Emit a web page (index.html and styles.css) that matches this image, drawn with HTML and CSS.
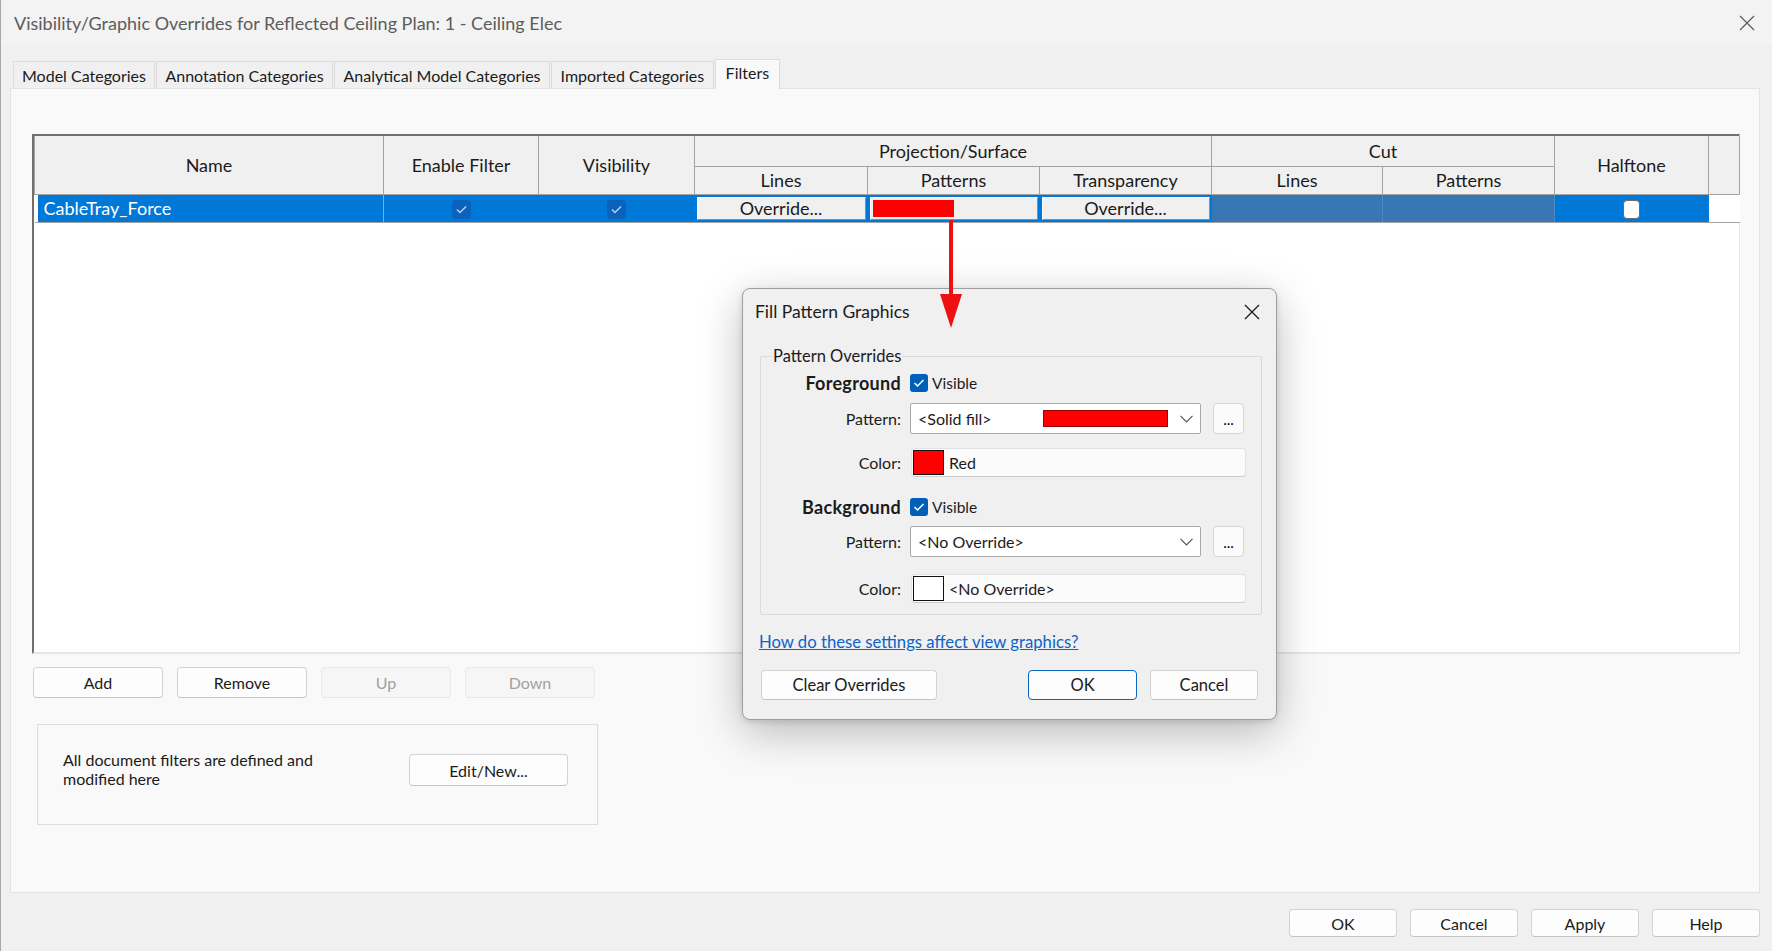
FILE: index.html
```html
<!DOCTYPE html>
<html lang="en">

<head>
    <meta charset="UTF-8">
    <title>Visibility/Graphic Overrides</title>
    <link rel="stylesheet" href="styles.css">
</head>

<body>
    <div class="window">
        <div class="titlebar">
            <span class="title">Visibility/Graphic Overrides for Reflected Ceiling Plan: 1 - Ceiling Elec</span>
            <span class="close-icon">
                <svg width="16" height="16" viewBox="0 0 16 16">
                    <path d="M1 1 L15 15 M15 1 L1 15" stroke="#5a5a5a" stroke-width="1.2" fill="none" />
                </svg>
            </span>
        </div>

        <div class="content">
            <div class="tabs">
                <div class="tab">Model Categories</div>
                <div class="tab">Annotation Categories</div>
                <div class="tab">Analytical Model Categories</div>
                <div class="tab">Imported Categories</div>
                <div class="tab active">Filters</div>
            </div>

            <div class="tab-page">
                <div class="filter-grid">
                    <table class="filters">
                        <colgroup>
                            <col class="c-name">
                            <col class="c-enable">
                            <col class="c-vis">
                            <col class="c-lines">
                            <col class="c-pat">
                            <col class="c-trans">
                            <col class="c-cut-lines">
                            <col class="c-cut-pat">
                            <col class="c-half">
                            <col class="c-fill">
                        </colgroup>
                        <thead>
                            <tr class="head-top">
                                <th rowspan="2">Name</th>
                                <th rowspan="2">Enable Filter</th>
                                <th rowspan="2">Visibility</th>
                                <th colspan="3">Projection/Surface</th>
                                <th colspan="2">Cut</th>
                                <th rowspan="2">Halftone</th>
                                <th rowspan="2"></th>
                            </tr>
                            <tr class="head-sub">
                                <th>Lines</th>
                                <th>Patterns</th>
                                <th>Transparency</th>
                                <th>Lines</th>
                                <th>Patterns</th>
                            </tr>
                        </thead>
                        <tbody>
                            <tr class="selected">
                                <td class="name-cell">CableTray_Force</td>
                                <td class="center">
                                    <span class="row-check">
                                        <svg width="19" height="19" viewBox="0 0 19 19">
                                            <polyline points="5,9.5 8,12.5 14,6.5" stroke="#b9d4ef" stroke-width="1.4" fill="none" />
                                        </svg>
                                    </span>
                                </td>
                                <td class="center">
                                    <span class="row-check">
                                        <svg width="19" height="19" viewBox="0 0 19 19">
                                            <polyline points="5,9.5 8,12.5 14,6.5" stroke="#b9d4ef" stroke-width="1.4" fill="none" />
                                        </svg>
                                    </span>
                                </td>
                                <td class="btn-cell"><div class="cell-btn">Override...</div></td>
                                <td class="btn-cell"><div class="cell-btn pattern-btn"><span class="red-bar"></span></div></td>
                                <td class="btn-cell"><div class="cell-btn">Override...</div></td>
                                <td class="dither"></td>
                                <td class="dither"></td>
                                <td class="center"><span class="half-check"></span></td>
                                <td class="blank"></td>
                            </tr>
                        </tbody>
                    </table>
                </div>

                <div class="grid-actions">
                    <button class="btn">Add</button>
                    <button class="btn">Remove</button>
                    <button class="btn" disabled>Up</button>
                    <button class="btn" disabled>Down</button>
                </div>

                <div class="info-box">
                    <p>All document filters are defined and<br>modified here</p>
                    <button class="btn edit-btn">Edit/New...</button>
                </div>
            </div>

            <div class="footer">
                <button class="btn">OK</button>
                <button class="btn">Cancel</button>
                <button class="btn">Apply</button>
                <button class="btn">Help</button>
            </div>
        </div>

        <div class="fill-dialog">
            <div class="fd-titlebar">
                <span>Fill Pattern Graphics</span>
                <svg width="16" height="16" viewBox="0 0 16 16">
                    <path d="M1 1 L15 15 M15 1 L1 15" stroke="#1b1b1b" stroke-width="1.3" fill="none" />
                </svg>
            </div>
            <div class="fd-body">
                <fieldset class="fd-group">
                    <legend>Pattern Overrides</legend>

                    <div class="fd-row head-row">
                        <span class="fd-label strong">Foreground</span>
                        <span class="blue-check">
                            <svg width="18" height="18" viewBox="0 0 18 18">
                                <polyline points="4.5,9 7.5,12 13.5,6" stroke="#fff" stroke-width="1.5" fill="none" />
                            </svg>
                        </span>
                        <span class="check-text">Visible</span>
                    </div>
                    <div class="fd-row pattern-row">
                        <span class="fd-label">Pattern:</span>
                        <div class="select">
                            <span class="select-text">&lt;Solid fill&gt;</span>
                            <span class="fill-bar"></span>
                            <svg class="chevron" width="13" height="8" viewBox="0 0 13 8">
                                <polyline points="0.5,0.8 6.5,6.8 12.5,0.8" stroke="#555" stroke-width="1.2" fill="none" />
                            </svg>
                        </div>
                        <button class="dots-btn">...</button>
                    </div>
                    <div class="fd-row color-row">
                        <span class="fd-label">Color:</span>
                        <div class="color-field">
                            <span class="swatch red"></span>
                            <span>Red</span>
                        </div>
                    </div>

                    <div class="fd-row head-row bg-head">
                        <span class="fd-label strong">Background</span>
                        <span class="blue-check">
                            <svg width="18" height="18" viewBox="0 0 18 18">
                                <polyline points="4.5,9 7.5,12 13.5,6" stroke="#fff" stroke-width="1.5" fill="none" />
                            </svg>
                        </span>
                        <span class="check-text">Visible</span>
                    </div>
                    <div class="fd-row pattern-row bg-pattern">
                        <span class="fd-label">Pattern:</span>
                        <div class="select">
                            <span class="select-text">&lt;No Override&gt;</span>
                            <svg class="chevron" width="13" height="8" viewBox="0 0 13 8">
                                <polyline points="0.5,0.8 6.5,6.8 12.5,0.8" stroke="#555" stroke-width="1.2" fill="none" />
                            </svg>
                        </div>
                        <button class="dots-btn">...</button>
                    </div>
                    <div class="fd-row color-row">
                        <span class="fd-label">Color:</span>
                        <div class="color-field">
                            <span class="swatch"></span>
                            <span>&lt;No Override&gt;</span>
                        </div>
                    </div>
                </fieldset>

                <a class="fd-link" href="#">How do these settings affect view graphics?</a>

                <div class="fd-actions">
                    <button class="btn clear-btn">Clear Overrides</button>
                    <button class="btn ok-btn">OK</button>
                    <button class="btn">Cancel</button>
                </div>
            </div>
        </div>

        <!-- red annotation arrow, drawn over the dialog -->
        <div class="arrow">
            <svg width="22" height="108" viewBox="0 0 22 108">
                <rect x="9" y="0" width="4" height="80" fill="#ee1111" />
                <polygon points="0,74 22,74 11,108" fill="#ee1111" />
            </svg>
        </div>
    </div>
</body>

</html>
```

FILE: styles.css
```css
* {
    box-sizing: border-box;
}

body {
    margin: 0;
    font-family: "Segoe UI", Lato, sans-serif;
    font-size: 16px;
    color: #1b1b1b;
    background: #f0f0f0;
}

.window {
    position: relative;
    width: 1772px;
    height: 951px;
    background: #f0f0f0;
    border-left: 1px solid #a8a8a8;
    overflow: hidden;
}

.titlebar {
    height: 45px;
    display: flex;
    align-items: center;
    justify-content: space-between;
    padding: 0 17px 0 13px;
    background: #f3f3f3;
    color: #5c5c5c;
    font-size: 18px;
}

.close-icon {
    display: flex;
}

.content {
    padding: 0 12px 0 9px;
}

/* tabs */
.tabs {
    display: flex;
    align-items: flex-end;
    height: 43px;
    padding-left: 3px;
}

.tab {
    height: 27px;
    padding: 0 8px;
    display: flex;
    align-items: center;
    border: 1px solid #dcdcdc;
    border-bottom: none;
    background: #f0f0f0;
    margin-right: 1px;
    font-size: 16px;
}

.tab:nth-child(n+2) {
    padding: 0 8.5px;
}

.tab.active {
    height: 30px;
    padding: 0 10px 5px;
    background: #f9f9f9;
    margin-bottom: -1px;
    position: relative;
}

.tab-page {
    height: 805px;
    background: #f9f9f9;
    border: 1px solid #e3e3e3;
    padding: 45px 0 0 21px;
}

/* filter grid */
.filter-grid {
    width: 1708px;
    height: 520px;
    background: #fff;
    border-style: solid;
    border-width: 2px 1px 2px 2px;
    border-color: #707070 #e6e6e6 #e6e6e6 #707070;
}

.filters {
    border-collapse: collapse;
    table-layout: fixed;
    width: 1705px;
}

.c-name { width: 349px; }
.c-enable { width: 155px; }
.c-vis { width: 156px; }
.c-lines { width: 173px; }
.c-pat { width: 172px; }
.c-trans { width: 172px; }
.c-cut-lines { width: 171px; }
.c-cut-pat { width: 172px; }
.c-half { width: 154px; }
.c-fill { width: 31px; }

.filters th {
    background: #f0f0f0;
    font-weight: normal;
    font-size: 18px;
    line-height: 20px;
    border: 1px solid #a3a3a3;
    padding: 0;
}

.filters thead tr:first-child th {
    border-top: none;
}

.head-top {
    height: 30px;
}

.head-sub {
    height: 28px;
}

.filters td {
    height: 27px;
    padding: 0;
    border-bottom: 1px solid #a3a3a3;
}

.selected td {
    background: #0078d7;
}

.selected .name-cell {
    color: #fff;
    font-size: 18px;
    padding-left: 9px;
    border-right: 1px solid #a3a3a3;
    box-shadow: inset 3px 0 #fff;
}

.center {
    text-align: center;
    vertical-align: middle;
}

.row-check {
    display: inline-block;
    width: 19px;
    height: 19px;
    border-radius: 4px;
    background: #0a62bd;
    vertical-align: middle;
}

.row-check svg {
    display: block;
}

.half-check {
    display: inline-block;
    width: 17px;
    height: 19px;
    border-radius: 4px;
    background: #fff;
    border: 1px solid #6c6c6c;
    vertical-align: middle;
}

.btn-cell {
    padding: 2px !important;
}

.cell-btn {
    height: 23px;
    background: #f0f0f0;
    border: 1px solid;
    border-color: #fff #8d8d8d #8d8d8d #fff;
    text-align: center;
    font-size: 18px;
    line-height: 20px;
    color: #1b1b1b;
}

.pattern-btn {
    text-align: left;
    padding: 2px;
}

.red-bar {
    display: block;
    width: 81px;
    height: 17px;
    background: #ff0000;
}

.selected .dither {
    background: repeating-conic-gradient(#176bc0 0 25%, #5a82a8 0 50%) 0 0 / 2px 2px;
    border-right: 1px dotted #7d93aa;
}

.selected .blank {
    background: #fff;
}

/* buttons */
.btn {
    font: inherit;
    font-size: 16px;
    color: #1b1b1b;
    background: #fdfdfd;
    border: 1px solid #d3d3d3;
    border-bottom-color: #c4c4c4;
    border-radius: 4px;
    padding: 0;
}

.btn:disabled {
    color: #a0a0a0;
    background: #f6f6f6;
    border-color: #e8e8e8;
}

.grid-actions {
    display: flex;
    gap: 14px;
    margin-top: 13px;
    padding-left: 1px;
}

.grid-actions .btn {
    width: 130px;
    height: 31px;
}

.info-box {
    width: 561px;
    height: 101px;
    margin: 26px 0 0 5px;
    border: 1px solid #dcdcdc;
    display: flex;
    align-items: center;
    justify-content: space-between;
    padding: 0 29px 9px 25px;
}

.info-box p {
    margin: 0 0 2px 0;
    line-height: 19px;
    font-size: 16px;
}

.edit-btn {
    width: 159px;
    height: 32px;
}

.footer {
    display: flex;
    justify-content: flex-end;
    gap: 13px;
    padding-top: 16px;
}

.footer .btn {
    width: 108px;
    height: 28px;
}

/* annotation arrow */
.arrow {
    position: absolute;
    left: 939px;
    top: 220px;
    z-index: 2;
}

.arrow svg {
    display: block;
}

/* fill pattern dialog */
.fill-dialog {
    position: absolute;
    left: 741px;
    top: 288px;
    width: 535px;
    height: 432px;
    background: #f0f0f0;
    border: 1px solid #9e9e9e;
    border-radius: 8px;
    box-shadow: 0 12px 44px rgba(0, 0, 0, 0.26), 0 2px 6px rgba(0, 0, 0, 0.12);
    z-index: 1;
}

.fd-titlebar {
    height: 45px;
    display: flex;
    align-items: center;
    justify-content: space-between;
    padding: 0 16px 0 12px;
    font-size: 17.5px;
}

.fd-body {
    padding: 11px 14px 0 17px;
}

.fd-group {
    margin: 0;
    padding: 5px 15px 11px 0;
    border: 1px solid #dadada;
    border-radius: 2px;
}

.fd-group legend {
    margin-left: 11px;
    padding: 0 1px;
    line-height: 22px;
    font-size: 16.5px;
}

.fd-row {
    display: flex;
    align-items: center;
}

.fd-label {
    width: 140px;
    flex-shrink: 0;
    text-align: right;
    margin-right: 9px;
    font-size: 16px;
}

.fd-label.strong {
    font-weight: bold;
    font-size: 18px;
    letter-spacing: 0.3px;
}

.head-row {
    height: 22px;
}

.bg-head {
    margin-top: 19px;
}

.blue-check {
    width: 18px;
    height: 18px;
    border-radius: 3px;
    background: #005fb8;
}

.blue-check svg {
    display: block;
}

.check-text {
    margin-left: 4px;
    font-size: 15.5px;
}

.pattern-row {
    margin-top: 9px;
}

.bg-pattern {
    margin-top: 8px;
}

.select {
    width: 291px;
    height: 31px;
    display: flex;
    align-items: center;
    padding: 0 7px 0 7px;
    background: #fff;
    border: 1px solid #a9a9a9;
    border-radius: 2px;
}

.select-text {
    flex: 1;
}

.fill-bar {
    width: 125px;
    height: 17px;
    background: #ff0000;
    border: 1px solid #9a0000;
}

.chevron {
    margin-left: 12px;
}

.dots-btn {
    width: 31px;
    height: 31px;
    margin-left: 12px;
    font: inherit;
    font-size: 15px;
    line-height: 30px;
    padding: 0;
    background: #fbfbfb;
    border: 1px solid #d6d6d6;
    border-radius: 4px;
}

.color-row {
    margin-top: 14px;
}

.color-row:last-child {
    margin-top: 17px;
}

.color-field {
    width: 335px;
    height: 29px;
    margin-left: 1px;
    display: flex;
    align-items: center;
    padding-left: 1px;
    background: #fbfbfb;
    border: 1px solid #e2e2e2;
    border-bottom-color: #cdcdcd;
    border-radius: 4px;
}

.swatch {
    width: 31px;
    height: 25px;
    margin-right: 5px;
    border: 1px solid #111;
    background: #fff;
}

.swatch.red {
    background: #ff0000;
}

.fd-link {
    display: block;
    margin: 17px 0 0 -1px;
    line-height: 20px;
    font-size: 16.7px;
    color: #0b63c8;
}

.fd-actions {
    display: flex;
    gap: 13px;
    margin-top: 18px;
    padding-right: 4px;
}

.fd-actions .btn {
    width: 108px;
    height: 30px;
    font-size: 16.5px;
}

.fd-actions .clear-btn {
    width: 176px;
    margin-left: 1px;
}

.fd-actions .ok-btn {
    width: 109px;
    margin-left: auto;
    border: 1px solid #0a64c2;
}
```
